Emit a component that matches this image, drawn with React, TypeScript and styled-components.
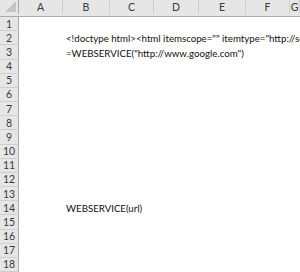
import styled, { createGlobalStyle } from 'styled-components';

const GlobalStyle = createGlobalStyle`
  html, body {
    margin: 0;
    padding: 0;
    background: #fff;
  }
  body {
    font-family: Lato, 'Liberation Sans', Arial, sans-serif;
  }
`;

const COLS = ['A', 'B', 'C', 'D', 'E', 'F', 'G'];
const TEMPLATE = '19px 44px 47px 44px 45px 47px 44px 1fr';

const cellText: Record<number, string> = {
  2: '<!doctype html><html itemscope="" itemtype="http://schema.org/WebPage" lang="en">',
  3: '=WEBSERVICE("http://www.google.com")',
  14: 'WEBSERVICE(url)',
};

const Sheet = styled.div`
  width: 300px;
  height: 272px;
  overflow: hidden;
  display: grid;
  grid-template-rows: 17px repeat(18, 1fr);
  background: #fff;
`;

const HeaderRow = styled.div`
  display: grid;
  grid-template-columns: ${TEMPLATE};
  background: #e6e6e6;
  border-bottom: 1px solid #ababab;
`;

const Corner = styled.div`
  position: relative;
  border-right: 1px solid #ababab;
  &::after {
    content: '';
    position: absolute;
    right: 2px;
    bottom: 2px;
    width: 0;
    height: 0;
    border-left: 11px solid transparent;
    border-bottom: 11px solid #c4c4c4;
  }
`;

const ColHead = styled.div`
  display: flex;
  align-items: center;
  justify-content: center;
  border-right: 1px solid #cfcfcf;
  font-size: 10.5px;
  color: #3a3a3a;
`;

const Row = styled.div`
  display: grid;
  grid-template-columns: ${TEMPLATE};
  min-height: 0;
`;

const RowHead = styled.div`
  display: flex;
  align-items: center;
  justify-content: center;
  background: #e6e6e6;
  border-right: 1px solid #ababab;
  border-bottom: 1px solid #cfcfcf;
  font-size: 10.5px;
  color: #3a3a3a;
`;

const Cell = styled.div`
  display: flex;
  align-items: flex-end;
  padding: 0 0 1px 3px;
  overflow: visible;
  white-space: nowrap;
  font-size: 9.7px;
  color: #111;
  min-width: 0;
`;

function App() {
  const rows = Array.from({ length: 18 }, (_, i) => i + 1);

  return (
    <>
      <GlobalStyle />
      <Sheet>
        <HeaderRow>
          <Corner />
          {COLS.map((c) => (
            <ColHead key={c}>{c}</ColHead>
          ))}
          <div />
        </HeaderRow>

        {rows.map((r) => (
          <Row key={r}>
            <RowHead>{r}</RowHead>
            <Cell />
            <Cell>{cellText[r]}</Cell>
          </Row>
        ))}
      </Sheet>
    </>
  );
}

export default App;
